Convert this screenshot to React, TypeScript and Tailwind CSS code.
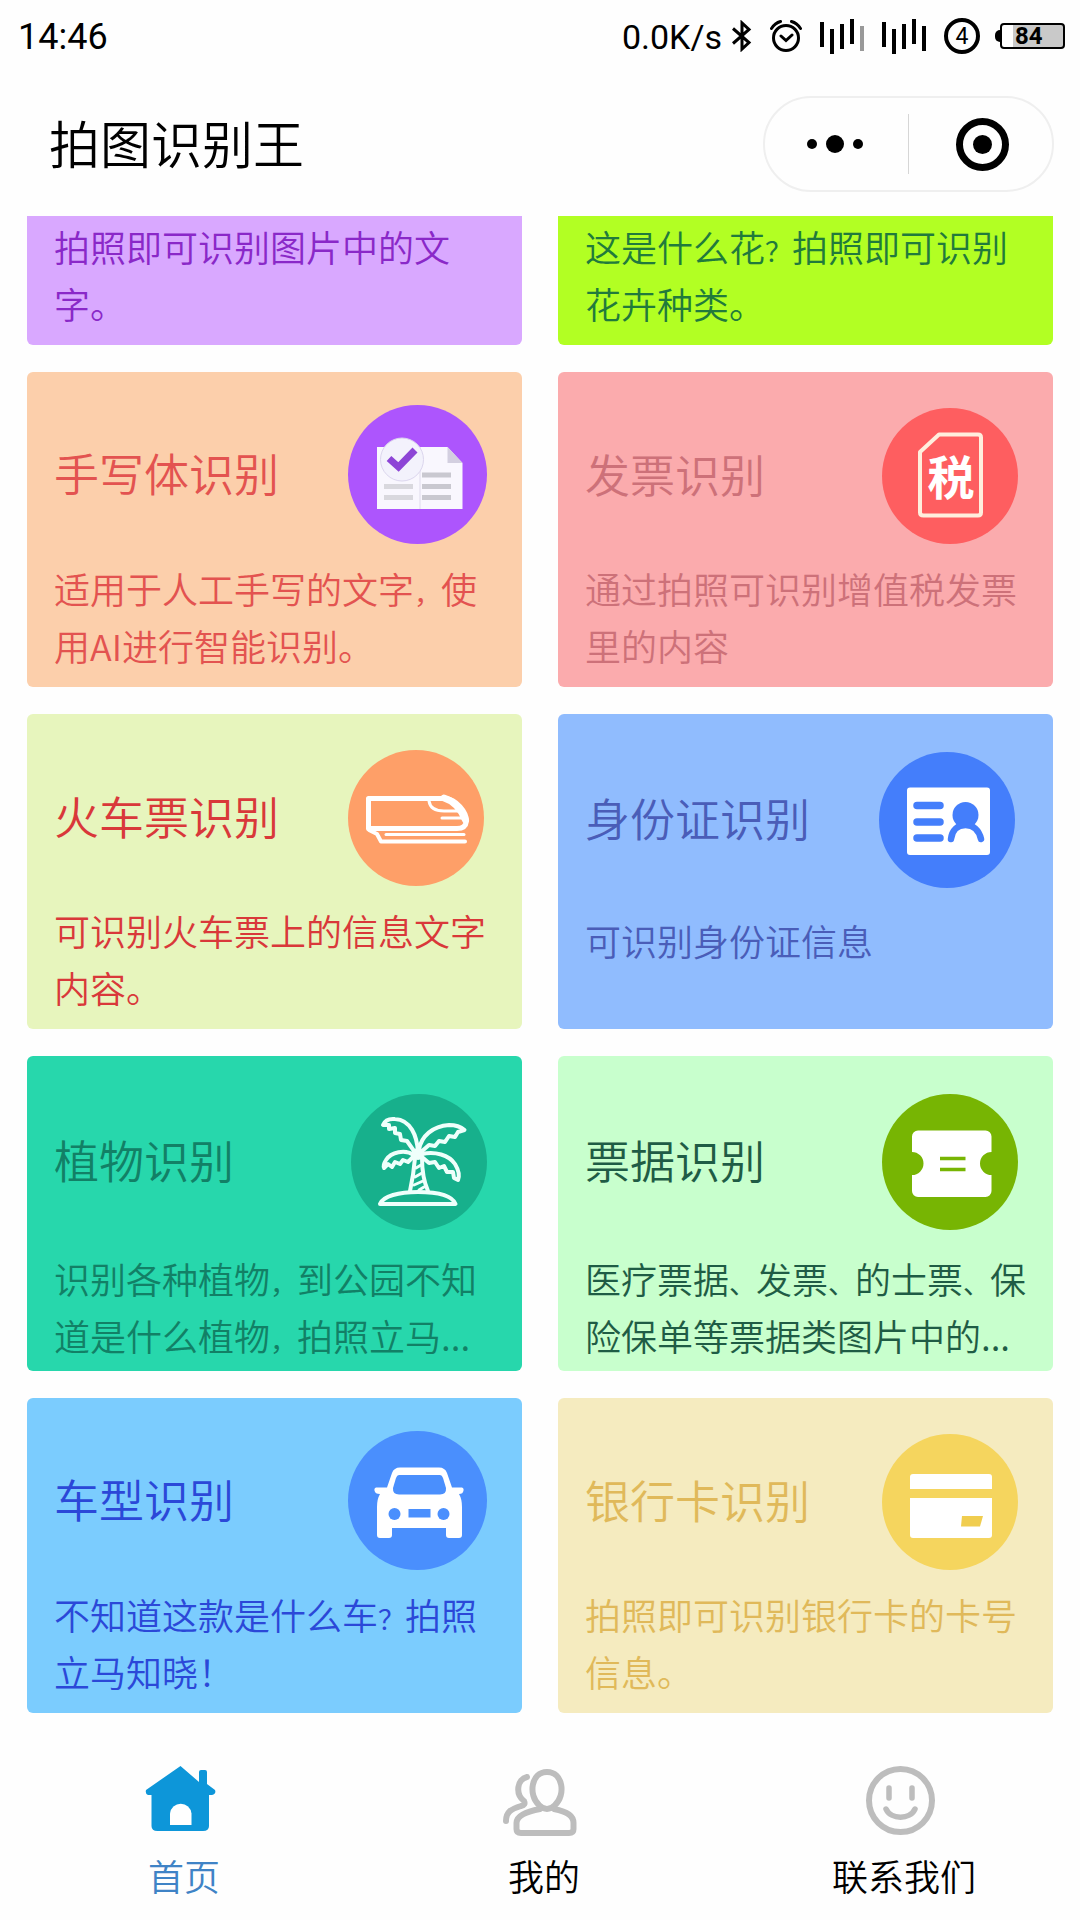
import { Fragment } from 'react';
import type { ReactNode } from 'react';

interface Feature {
  title: string;
  desc: string[];
  color: string;
  head: string;
  gap: string;
  icon: ReactNode;
}

function HandwritingIcon() {
  return (
    <svg className="h-[139px] w-[139px] shrink-0" viewBox="0 0 139 139" fill="none">
      <circle cx="69.5" cy="69.5" r="69.5" fill="#ad55fd" />
      <path d="M29 42H99.5L114.5 58V104H29Z" fill="#f9f7fe" />
      <path d="M72 42V104" stroke="#ece9f5" strokeWidth="2" />
      <path d="M99.5 42L114.5 58H99.5Z" fill="#d3cfe0" />
      <path d="M36 81.5H65M36 92.5H65" stroke="#d9d8de" strokeWidth="5" />
      <path d="M74 70H103M74 81.5H103M74 92.5H103" stroke="#c9c8d0" strokeWidth="5" />
      <circle cx="54" cy="54.5" r="21.5" fill="#f3f2fc" stroke="#dcd6ee" />
      <path d="M41 53.5L50.5 62L67 45" stroke="#8d45d6" strokeWidth="7" />
    </svg>
  );
}

function InvoiceIcon() {
  return (
    <svg className="h-[136px] w-[136px] shrink-0" viewBox="0 0 136 136" fill="none">
      <circle cx="68" cy="68" r="68" fill="#fe5e60" />
      <path
        d="M57 26.5H96Q99 26.5 99 29.5V104.5Q99 107.5 96 107.5H41.5Q38 107.5 38 104.5V44Z"
        stroke="#ffeedd"
        strokeWidth="4"
        strokeLinejoin="round"
      />
      <text
        x="69"
        y="87"
        textAnchor="middle"
        fill="#fff"
        className="font-['Noto_Sans_CJK_SC',sans-serif] text-[47px] font-bold"
      >
        税
      </text>
    </svg>
  );
}

function TrainIcon() {
  return (
    <svg
      className="h-[136px] w-[136px] shrink-0"
      viewBox="0 0 136 136"
      fill="none"
      stroke="#fff"
      strokeLinecap="round"
      strokeLinejoin="round"
    >
      <circle cx="68" cy="68" r="68" fill="#fe9f68" stroke="none" />
      <path
        d="M20.5 48.5H98C108 49.5 118.5 62 118.5 71C118 76 115 78.5 109 78.5H20.5Z"
        strokeWidth="5"
      />
      <path d="M96 48C106 51 113 59 117.5 70" strokeWidth="7" />
      <path d="M81 51C82 58 88 61 96 61H112M94 68H116" strokeWidth="3" />
      <path d="M21 80L29 84L33 91.5H117" strokeWidth="4" />
      <path d="M38 84.5H116" strokeWidth="3" />
    </svg>
  );
}

function IdCardIcon() {
  return (
    <svg
      className="h-[136px] w-[136px] shrink-0"
      viewBox="0 0 136 136"
      fill="none"
      stroke="#447efb"
      strokeLinecap="round"
    >
      <circle cx="68" cy="68" r="68" fill="#447efb" stroke="none" />
      <rect x="28" y="35.5" width="83" height="67.5" rx="3" fill="#fff" stroke="none" />
      <path d="M38 53.5H61M38 70H61M38 86H61" strokeWidth="7.5" />
      <circle cx="86.5" cy="63" r="13" fill="#447efb" stroke="none" />
      <path d="M72 87C73 78 79 73 86.5 73S100 78 102 87" strokeWidth="6.5" />
    </svg>
  );
}

function PalmIcon() {
  return (
    <svg
      className="h-[136px] w-[136px] shrink-0"
      viewBox="0 0 136 136"
      fill="none"
      stroke="#effffb"
      strokeWidth="4"
      strokeLinecap="round"
      strokeLinejoin="round"
    >
      <circle cx="68" cy="68" r="68" fill="#17b08c" stroke="none" />
      <path d="M67 58C66 42 60 26 44 25C39 24.5 34 26 32 31L38 31L38 35L44 34L44 39L49 40L50 46L56 47L63 57" />
      <path d="M68 56C70 42 82 32 98 31C105 31 110 33 113.5 36L107 38L104 43L98 42L94 48L88 47L84 52L78 51L70 58" />
      <path d="M63 61C54 55 40 58 35 66C33 69 32 73 33 74L37 70L41 73L44 68L49 70L52 66L57 68L63 62" />
      <path d="M71 60C84 57 98 61 104 70C107 75 109 81 107 86L103 84L102 78L96 78L93 72L88 74L84 68L78 69L71 63" />
      <path d="M64 64C63 76 61 88 59 97M71 64C71 77 73 88 77 97" />
      <path d="M65 74L70 71M64 83L71 79M63 91L72 87M68 96L73 93" strokeWidth="3" />
      <path d="M29 110C32 102 48 98 67 98S101 101 104.5 110Z" />
      <circle cx="67" cy="60" r="6" fill="#effffb" stroke="none" />
    </svg>
  );
}

function TicketIcon() {
  return (
    <svg className="h-[136px] w-[136px] shrink-0" viewBox="0 0 136 136" fill="none">
      <circle cx="68" cy="68" r="68" fill="#77b503" />
      <path
        d="M36 36.5H103.5A6 6 0 0 1 109.5 42.5V58A11.5 11.5 0 0 0 109.5 81V97A6 6 0 0 1 103.5 103H36A6 6 0 0 1 30 97V81A11.5 11.5 0 0 0 30 58V42.5A6 6 0 0 1 36 36.5Z"
        fill="#fff"
      />
      <path d="M58 64.5H83.5M58 75.5H83.5" stroke="#77b503" strokeWidth="3.5" />
    </svg>
  );
}

function CarIcon() {
  return (
    <svg className="h-[139px] w-[139px] shrink-0" viewBox="0 0 139 139" fill="none">
      <circle cx="69.5" cy="69.5" r="69.5" fill="#4a8ffd" />
      <path
        d="M52 36.5H91Q97 36.5 99 42L104 56.5H114Q116 57 115.5 59.5Q115 63 111 63Q114 68 114 76V104Q114 107 111 107H101Q98 107 98 104V97H44V104Q44 107 41 107H32Q29 107 29 104V76Q29 68 32 63Q27 63 26.5 59.5Q26 57 28 56.5H39L44 42Q46 36.5 52 36.5Z"
        fill="#fff"
      />
      <path
        d="M51 44H92Q94 44 95 47L98 57Q98.5 63.5 92 63.5H51Q44.5 63.5 45 57L48 47Q49 44 51 44Z"
        fill="#4a8ffd"
      />
      <circle cx="46.5" cy="83" r="6" fill="#4a8ffd" />
      <circle cx="95.5" cy="83" r="6" fill="#4a8ffd" />
      <rect x="60.5" y="78" width="22" height="8.5" fill="#4a8ffd" />
    </svg>
  );
}

function BankCardIcon() {
  return (
    <svg className="h-[136px] w-[136px] shrink-0" viewBox="0 0 136 136" fill="none">
      <circle cx="68" cy="68" r="68" fill="#f5d55e" />
      <path d="M31 40H107Q110 40 110 43V55H28V43Q28 40 31 40Z" fill="#fff" />
      <path d="M28 64H110V101Q110 104 107 104H31Q28 104 28 101Z" fill="#fff" />
      <path d="M80 82H101L98 92.5H79Z" fill="#f0cd4f" />
    </svg>
  );
}

const clippedFeatures = [
  { desc: ['拍照即可识别图片中的文', '字。'], color: 'bg-[#d9a8ff] text-[#8a28c8]' },
  { desc: ['这是什么花？拍照即可识别', '花卉种类。'], color: 'bg-[#b2ff23] text-[#217a3c]' },
];

const features: Feature[] = [
  {
    title: '手写体识别',
    desc: ['适用于人工手写的文字，使', '用AI进行智能识别。'],
    color: 'bg-[#fccfab] text-[#e35350]',
    head: 'pt-[33px] pr-[35px]',
    gap: 'pt-4',
    icon: <HandwritingIcon />,
  },
  {
    title: '发票识别',
    desc: ['通过拍照可识别增值税发票', '里的内容'],
    color: 'bg-[#fbabad] text-[#cd7179]',
    head: 'pt-9 pr-[35px]',
    gap: 'pt-4',
    icon: <InvoiceIcon />,
  },
  {
    title: '火车票识别',
    desc: ['可识别火车票上的信息文字', '内容。'],
    color: 'bg-[#e7f5bd] text-[#d9383a]',
    head: 'pt-9 pr-[38px]',
    gap: 'pt-4',
    icon: <TrainIcon />,
  },
  {
    title: '身份证识别',
    desc: ['可识别身份证信息'],
    color: 'bg-[#90bcfe] text-[#4a5db8]',
    head: 'pt-[38px] pr-[38px]',
    gap: 'pt-6',
    icon: <IdCardIcon />,
  },
  {
    title: '植物识别',
    desc: ['识别各种植物，到公园不知', '道是什么植物，拍照立马...'],
    color: 'bg-[#27d7ac] text-[#128066]',
    head: 'pt-[38px] pr-[35px]',
    gap: 'pt-5',
    icon: <PalmIcon />,
  },
  {
    title: '票据识别',
    desc: ['医疗票据、发票、的士票、保', '险保单等票据类图片中的...'],
    color: 'bg-[#c8ffcd] text-[#1f5c45]',
    head: 'pt-[38px] pr-[35px]',
    gap: 'pt-5',
    icon: <TicketIcon />,
  },
  {
    title: '车型识别',
    desc: ['不知道这款是什么车？拍照', '立马知晓！'],
    color: 'bg-[#7bccfe] text-[#2b48d8]',
    head: 'pt-[33px] pr-[35px]',
    gap: 'pt-4',
    icon: <CarIcon />,
  },
  {
    title: '银行卡识别',
    desc: ['拍照即可识别银行卡的卡号', '信息。'],
    color: 'bg-[#f5ebbf] text-[#e0b95a]',
    head: 'pt-9 pr-[35px]',
    gap: 'pt-4',
    icon: <BankCardIcon />,
  },
];

// Commas and question marks inside a line are set one step smaller so they take less room
function Description({ lines }: { lines: string[] }) {
  return (
    <p className="text-[36px] leading-[57px]">
      {lines.map((line) => (
        <span key={line} className="block">
          {line.split(/([，、？])/).map((part, i) =>
            i % 2 ? (
              <span key={i} className="text-[27px] leading-none font-normal">
                {part}
              </span>
            ) : (
              <Fragment key={i}>{part}</Fragment>
            )
          )}
        </span>
      ))}
    </p>
  );
}

function FeatureCard({ feature }: { feature: Feature }) {
  return (
    <button className={`flex min-h-[315px] flex-col rounded-md pl-[27px] text-left ${feature.color}`}>
      <div className={`flex w-full items-center justify-between ${feature.head}`}>
        <h2 className="pb-1 text-[45px] leading-[60px]">{feature.title}</h2>
        {feature.icon}
      </div>
      <div className={feature.gap}>
        <Description lines={feature.desc} />
      </div>
    </button>
  );
}

function SignalBars({ last }: { last: string }) {
  return (
    <svg className="h-9 w-11" viewBox="0 0 44 36" fill="none" stroke="#000" strokeWidth="4">
      <path d="M2 4V29M12 11V36M22 6V31M32 1V26" />
      <path d="M42 8V33" stroke={last} />
    </svg>
  );
}

function StatusBar() {
  return (
    <div className="flex h-[72px] items-center justify-between pr-[15px] pl-[18px] font-[Roboto,sans-serif] text-[34px] leading-10 font-normal">
      <span className="pt-0.5 text-[36px]">14:46</span>
      <div className="flex items-center">
        <span className="pt-0.5">0.0K/s</span>
        <svg className="ml-2.5 h-8 w-5" viewBox="0 0 20 32" fill="none" stroke="#000" strokeWidth="3">
          <path d="M1 8.5L17 22.5L10 29V3L17 9.5L1 23.5" />
        </svg>
        <svg
          className="ml-[18px] h-8 w-8"
          viewBox="0 0 32 32"
          fill="none"
          stroke="#000"
          strokeWidth="3"
          strokeLinecap="round"
        >
          <circle cx="16" cy="18" r="12.5" />
          <path d="M11 16L16 20.5L22 15M1.5 8.5Q5 3 10.5 1.5M30.5 8.5Q27 3 21.5 1.5" />
        </svg>
        <div className="ml-[18px] flex gap-[18px]">
          <SignalBars last="#999" />
          <SignalBars last="#000" />
        </div>
        <div className="ml-[18px] flex h-9 w-9 items-center justify-center rounded-full border-4 border-black text-[23px] leading-none">
          4
        </div>
        <div className="ml-[15px] h-3 w-[5px] rounded-l-full bg-black" />
        <div className="flex h-[26px] w-[65px] items-center rounded border-2 border-black bg-[linear-gradient(to_right,white_18%,#c9c9c9_18%)] pl-[13px] text-[24px] leading-none font-bold">
          84
        </div>
      </div>
    </div>
  );
}

function NavBar() {
  return (
    <header className="flex h-36 items-center justify-between pr-[26px] pl-[49px]">
      <h1 className="pb-1 text-[51px] leading-[72px]">拍图识别王</h1>
      <div className="flex h-24 w-[291px] items-center rounded-full border-2 border-[#efefef]">
        <button className="flex flex-1 items-center justify-center gap-[9px] pr-1" aria-label="更多">
          <i className="h-2.5 w-2.5 rounded-full bg-black" />
          <i className="h-[18px] w-[18px] rounded-full bg-black" />
          <i className="h-2.5 w-2.5 rounded-full bg-black" />
        </button>
        <div className="h-[60px] w-px bg-[#d6d6d6]" />
        <button className="flex flex-1 items-center justify-center pl-1" aria-label="关闭">
          <i className="flex h-[53px] w-[53px] items-center justify-center rounded-full border-[7px] border-black">
            <i className="h-[19px] w-[19px] rounded-full bg-black" />
          </i>
        </button>
      </div>
    </header>
  );
}

function HomeIcon() {
  return (
    <svg className="h-[70px] w-[74px]" viewBox="-3 0 74 70" fill="#0d96d9">
      <path d="M34.5 0L53 16V6Q53 4 55 4H59Q61 4 61 6V18L69 24Q70.5 28 66 29H63V60Q63 65 57 65H11.5Q5.5 65 5.5 60V29H2Q-1 28 0 24Z" />
      <path d="M24 59V47.5A10.8 10.8 0 0 1 45.5 47.5V59Z" fill="#fff" />
    </svg>
  );
}

function PeopleIcon() {
  return (
    <svg
      className="h-[70px] w-[74px]"
      viewBox="0 0 74 70"
      fill="none"
      stroke="#bdbdbd"
      strokeWidth="6"
      strokeLinecap="round"
    >
      <path d="M36 39C25 29 28 6 44 6S63 29 52 39Q48 43 44 43T36 39Z" />
      <path d="M37 43C22 46 13.5 50 13.5 57V63Q13.5 67 18 67H66Q70.5 67 70.5 63V57C70.5 50 65 46 51 43" />
      <path d="M24 11C14 13 12 28 21 35Q23 39 18 40C8 43 3 46 3 55" />
    </svg>
  );
}

function SmileIcon() {
  return (
    <svg
      className="h-[70px] w-[74px]"
      viewBox="-3 0 74 70"
      fill="none"
      stroke="#bdbdbd"
      strokeWidth="5.5"
      strokeLinecap="round"
    >
      <circle cx="34.5" cy="34.5" r="31.5" strokeWidth="6" />
      <path d="M23 22V32M46 22V32M20 43C25 54 44 54 49 43" />
    </svg>
  );
}

const tabs = [
  { label: '首页', color: 'text-[#3f83c6]', icon: <HomeIcon /> },
  { label: '我的', color: 'text-black', icon: <PeopleIcon /> },
  { label: '联系我们', color: 'text-black', icon: <SmileIcon /> },
];

function TabBar() {
  return (
    <nav className="mt-auto grid grid-cols-3 pb-[18px]">
      {tabs.map((tab) => (
        <a key={tab.label} href="#" className={`flex flex-col items-center gap-3 ${tab.color}`}>
          {tab.icon}
          <span className="pl-2 text-[36px] leading-[54px]">{tab.label}</span>
        </a>
      ))}
    </nav>
  );
}

export default function App() {
  return (
    <div className="flex min-h-screen flex-col bg-[#fefefe] font-['Noto_Sans_CJK_SC',sans-serif] font-[350] text-black">
      <StatusBar />
      <NavBar />
      <main className="grid grid-cols-2 gap-x-9 gap-y-[27px] px-[27px]">
        {clippedFeatures.map((feature) => (
          <button
            key={feature.color}
            className={`rounded-b-md pt-0.5 pb-[13px] pl-[27px] text-left ${feature.color}`}
          >
            <Description lines={feature.desc} />
          </button>
        ))}
        {features.map((feature) => (
          <FeatureCard key={feature.title} feature={feature} />
        ))}
      </main>
      <TabBar />
    </div>
  );
}
